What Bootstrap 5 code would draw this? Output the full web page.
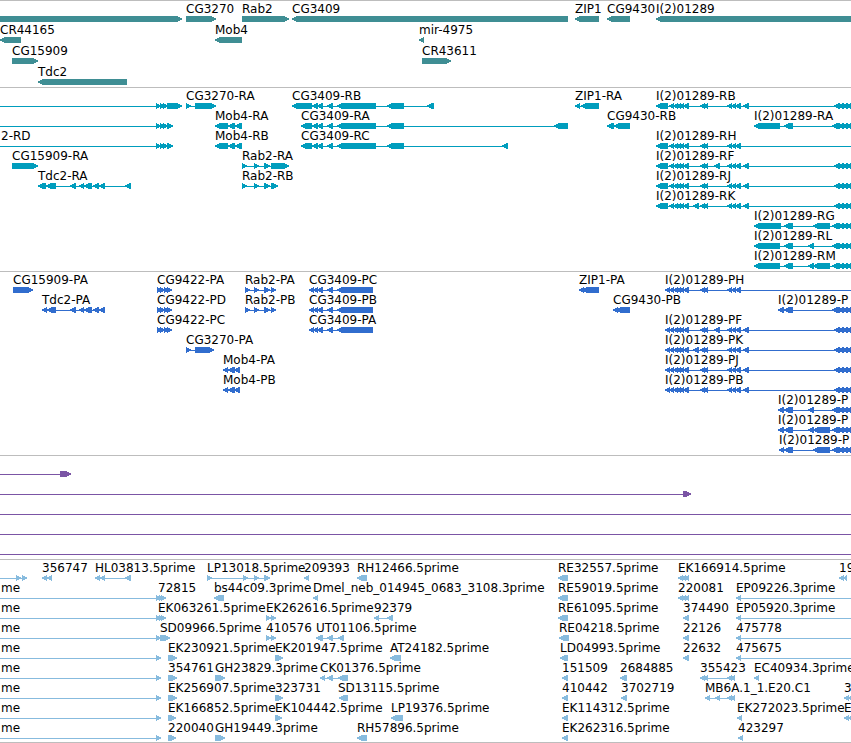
<!DOCTYPE html>
<html lang="en">
<head>
<meta charset="utf-8">
<meta name="viewport" content="width=device-width, initial-scale=1">
<title>Genome browser</title>
<link href="https://cdn.jsdelivr.net/npm/bootstrap@5.3.0/dist/css/bootstrap.min.css" rel="stylesheet">
<style>
  body { font: 12px/16px "DejaVu Sans", sans-serif; color: #000; }
  #tracks { --bs-border-color: #bdbdbd; }
  .track { padding-bottom: 3px; }
  .lane { height: 20px; }
  .lane svg { height: 20px; overflow: visible; shape-rendering: crispEdges; fill: currentColor; }
  .feature-name { position: absolute; top: 0; white-space: nowrap; color: #000; }
  .genes { color: #3f8e94; row-gap: 1px; }
  .transcripts { color: #009dbd; }
  .proteins { color: #316dce; }
  .clones { color: #7b55a5; }
  .ests { color: #87bbde; padding-bottom: 2px; }
</style>
<script src="https://cdn.jsdelivr.net/npm/bootstrap@5.3.0/dist/js/bootstrap.bundle.min.js"></script>
</head>
<body class="bg-white overflow-x-hidden">
<main class="border-bottom" id="tracks">
  <section class="track genes border-top overflow-hidden d-flex flex-column" data-track="genes" aria-label="Genes"></section>
  <section class="track transcripts border-top overflow-hidden d-flex flex-column" data-track="transcripts" aria-label="Transcripts"></section>
  <section class="track proteins border-top overflow-hidden d-flex flex-column" data-track="proteins" aria-label="Proteins"></section>
  <section class="track clones border-top overflow-hidden d-flex flex-column" data-track="clones" aria-label="Clones"></section>
  <section class="track ests border-top overflow-hidden d-flex flex-column" data-track="ests" aria-label="ESTs"></section>
</main>
<script>
// One string per lane; features are separated by "|" and written as
// "name; label x; strand; backbone start-end; exon start-end ...".
const L6 = '669-674 673-678 676-681 679-684 683-689';
const P6 = '665-670 ' + L6;
const MID = '700-705 703-708', TRI = '727-732 731-736 735-741', END = '834-840 838-844 842-848 846-852';
const FAR = '832-838 ' + END;
const C6 = '312-318 317-323 327-333 337-376 387-404';
const CP = '309-314 313-318 317-323 327-333 337-373';
const data = {
  genes: [
    ';0;>;;0-182|CG3270;186;>;;186-216|Rab2;242;>;;242-289|CG3409;292;<;;292-568|ZIP1;575;<;;575-599|CG9430;607;<;;607-630|I(2)01289;656;<;;656-2400',
    'CR44165;0;<;;0-21|Mob4;215;<;;215-242|mir-4975;419;<;;419-424',
    'CG15909;12;>;;12-38|CR43611;422;>;;422-451',
    'Tdc2;38;<;;38-127'
  ],
  transcripts: [
    `;0;>;0-168;156-161 160-165 163-168 167-182|CG3270-RA;186;>;186-216;186-191 195-216|CG3409-RB;292;<;292-434;292-312 ${C6} 427-434|ZIP1-RA;575;<;575-599;575-580 581-599|I(2)01289-RB;656;<;656-2400;656-668 ${L6} ${MID} ${TRI} 743-749 ${END}`,
    `;0;>;0-168;156-161 160-165 163-168 167-173|Mob4-RA;215;<;215-242;215-228 228-235 235-242|CG3409-RA;301;<;301-568;301-312 ${C6} 554-568|CG9430-RB;607;<;607-630;607-614 614-630|I(2)01289-RA;754;<;754-2400;754-780 784-793 ${FAR}`,
    `2-RD;1;>;0-168;156-161 160-165 163-168 167-173|Mob4-RB;215;<;215-242;215-228 228-235 235-242|CG3409-RC;301;<;301-508;301-312 ${C6} 502-508|I(2)01289-RH;656;<;656-2400;656-668 ${L6} ${MID} ${TRI}`,
    `CG15909-RA;12;>;;12-38|Rab2-RA;242;>;242-289;242-247 254-259 264-270 271-289|I(2)01289-RF;656;<;656-2400;656-668 ${L6} ${MID} 714-720 ${TRI} 743-749 ${END}`,
    `Tdc2-RA;38;<;38-131;38-46 46-56 70-76 79-84 84-92 93-99 99-105 125-131|Rab2-RB;242;>;242-278;242-247 254-259 264-270 271-278|I(2)01289-RJ;656;<;656-2400;656-668 ${L6} ${MID} ${TRI} 743-749 ${END}`,
    `I(2)01289-RK;656;<;656-2400;656-668 ${L6} 693-699 ${MID} ${TRI} 743-749 ${END}`,
    `I(2)01289-RG;754;<;754-2400;754-781 784-793 813-830 ${FAR}`,
    `I(2)01289-RL;754;<;754-2400;754-780 784-793 808-814 ${FAR}`,
    `I(2)01289-RM;754;<;754-2400;754-780 784-793 808-814 813-830 ${FAR}`
  ],
  proteins: [
    `CG15909-PA;13;>;;13-33|CG9422-PA;157;>;;157-162 160-165 164-169 167-172|Rab2-PA;245;>;245-276;245-250 254-259 264-270 271-276|CG3409-PC;309;<;309-373;${CP}|ZIP1-PA;579;<;;579-584 582-599|I(2)01289-PH;665;<;665-2400;${P6} ${MID} ${TRI}`,
    `Tdc2-PA;42;<;42-105;42-47 47-56 70-76 79-84 84-92 93-99 99-105|CG9422-PD;157;>;;157-162 160-165 164-169 167-172|Rab2-PB;245;>;245-276;245-250 254-259 264-270 271-276|CG3409-PB;309;<;309-373;${CP}|CG9430-PB;613;<;;613-618 616-630|I(2)01289-P;778;<;778-2400;778-784 784-793 ${FAR}`,
    `CG9422-PC;157;>;;157-162 160-165 164-169 167-172|CG3409-PA;309;<;309-373;${CP}|I(2)01289-PF;665;<;665-2400;${P6} ${MID} 714-720 ${TRI} 743-749 ${END}`,
    `CG3270-PA;186;>;186-214;186-191 195-214|I(2)01289-PK;665;<;665-2400;${P6} 693-699 ${MID} ${TRI} 743-749 ${END}`,
    `Mob4-PA;223;<;223-240;223-228 228-235 234-240|I(2)01289-PJ;665;<;665-2400;${P6} ${MID} ${TRI} 743-749 ${END}`,
    `Mob4-PB;223;<;223-240;223-228 228-235 234-240|I(2)01289-PB;665;<;665-2400;${P6} ${MID} ${TRI} 743-749 ${END}`,
    `I(2)01289-P;778;<;778-2400;778-784 784-793 808-814 ${FAR}`,
    `I(2)01289-P;778;<;778-2400;778-784 784-793 808-814 813-830 ${FAR}`,
    `I(2)01289-P;779;<;779-2400;779-784 784-793 813-830 ${FAR}`
  ],
  clones: [';0;>;0-60;60-71', ';0;>;0-683;683-691', ';0;>;0-2400;', ';0;>;0-2400;', ';0;>;0-2400;'],
  ests: [
    ';0;>;0-27;16-21 22-27|356747;42;<;;42-47 47-52|HL03813.5prime;95;<;95-131;95-100 100-105 125-131|LP13018.5prime;207;>;207-270;207-212 243-248 254-259 264-270|209393;304;<;;304-309|RH12466.5prime;357;<;;357-367|RE32557.5prime;558;<;;558-568|EK166914.5prime;678;<;;678-683 681-686 684-689|19;839;<;;839-844 843-847',
    'me;1;>;0-156;156-161 159-164 161-166|72815;158;>;;|bs44c09.3prime;214;<;;214-224|Dmel_neb_014945_0683_3108.3prime;313;<;;313-318|RE59019.5prime;558;<;;558-568|220081;678;<;;678-683 681-686 684-689|EP09226.3prime;736;<;736-2400;736-741',
    'me;1;>;0-156;156-161 159-164 161-166|EK063261.5prime;158;>;;|EK262616.5prime;266;>;;266-271 271-276|92379;374;<;374-393;374-379 387-393|RE61095.5prime;558;<;;558-568|374490;683;<;;683-689|EP05920.3prime;736;<;736-2400;736-741',
    'me;1;>;0-160;156-161 160-170|SD09966.5prime;160;>;;|410576;266;>;;266-271 271-276|UT01106.5prime;316;<;316-344;316-323 327-333 338-344|RE04218.5prime;559;<;;559-569|22126;683;<;;683-689|475778;736;<;736-2400;736-741',
    'me;1;>;0-161;156-161|EK230921.5prime;168;>;;168-177|EK201947.5prime;275;>;;275-283|AT24182.5prime;390;<;;390-401|LD04993.5prime;560;<;;560-568|22632;683;<;;683-689|475675;736;<;736-2400;736-741',
    'me;1;>;0-161;156-161|354761;168;>;;168-177|GH23829.3prime;215;>;;215-225|CK01376.5prime;320;<;320-348;320-325 327-333 338-348|151509;562;<;;562-568|2684885;620;<;;620-627|355423;700;<;700-735;700-705 703-708 727-732 730-735|EC40934.3prime;754;<;;754-759',
    'me;1;>;0-161;156-161|EK256907.5prime;168;>;;168-177|323731;275;>;;275-283|SD13115.5prime;338;<;;339-348|410442;562;<;;562-568|3702719;621;<;;621-627|MB6A.1_1.E20.C1;705;<;705-735;705-710 715-720 727-732 730-735|3;844;<;;844-849 848-853',
    'me;1;>;0-161;156-161|EK166852.5prime;168;>;;168-176|EK104442.5prime;275;>;;275-282|LP19376.5prime;391;<;;391-403|EK114312.5prime;562;<;;562-568|EK272023.5prime;737;<;;737-742|E;844;<;;844-849 848-853',
    'me;1;>;0-161;156-161|220040;168;>;;168-176|GH19449.3prime;215;>;;215-225|RH57896.5prime;357;<;;357-367|EK262316.5prime;562;<;;562-568|423297;738;<;;738-743'
  ]
};

// Block with a pointed end on the strand side; y spans 15 to 21 in a lane.
// Both directions are traced clockwise so that overlaps stay filled.
function exon(a, b, strand) {
  const head = Math.min(5, b - a);
  return strand === '>'
    ? `M${a} 15H${b - head}L${b} 17.5V18.5L${b - head} 21H${a}Z`
    : `M${b} 15V21H${a + head}L${a} 18.5V17.5L${a + head} 15Z`;
}

document.querySelectorAll('[data-track]').forEach(track => {
  track.innerHTML = data[track.dataset.track].map(lane => {
    let shapes = '', names = '';
    lane.split('|').forEach(item => {
      const [name, x, strand, backbone, exons] = item.split(';');
      if (backbone) {
        const [a, b] = backbone.split('-').map(Number);
        shapes += `M${a} 18H${b}V19H${a}Z`;
      }
      if (exons) exons.split(' ').forEach(e => {
        const [a, b] = e.split('-').map(Number);
        shapes += exon(a, b, strand);
      });
      if (name) names += `<span class="feature-name" style="left:${x}px">${name}</span>`;
    });
    return `<div class="lane position-relative"><svg class="d-block w-100" aria-hidden="true"><path d="${shapes}"/></svg>${names}</div>`;
  }).join('');
});
</script>
</body>
</html>
